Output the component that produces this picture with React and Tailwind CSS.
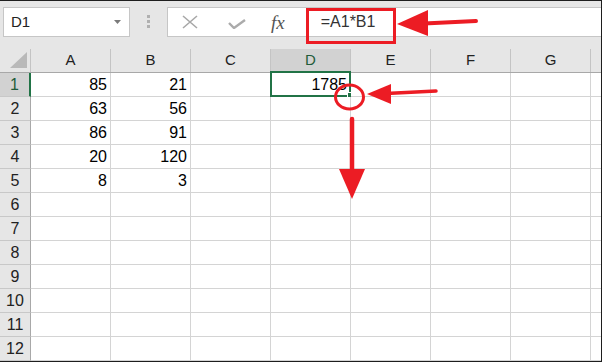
import React from "react";

const cols = ["A", "B", "C", "D", "E", "F", "G"];
const data = {
  1: { A: "85", B: "21", D: "1785" },
  2: { A: "63", B: "56" },
  3: { A: "86", B: "91" },
  4: { A: "20", B: "120" },
  5: { A: "8", B: "3" },
};

function Toolbar() {
  return (
    <div className="flex h-[48px] items-start pt-[6px]">
      {/* name box */}
      <div className="ml-[3px] flex h-[30px] w-[127px] items-center justify-between border border-[#c6c6c6] bg-white pl-[7px] pr-[8px] text-[15px] text-[#222]">
        <span>D1</span>
        <svg width="7" height="4" viewBox="0 0 7 4">
          <path d="M0 0 H7 L3.5 4 Z" fill="#7a7a7a" />
        </svg>
      </div>
      {/* grip dots */}
      <div className="flex w-[37px] flex-col items-center gap-[2px] pt-[8px]">
        <div className="h-[3px] w-[3px] bg-[#b0b0b0]" />
        <div className="h-[3px] w-[3px] bg-[#b0b0b0]" />
        <div className="h-[3px] w-[3px] bg-[#b0b0b0]" />
      </div>
      {/* formula bar */}
      <div className="flex h-[30px] flex-1 items-center border-y border-l border-[#c6c6c6] bg-white">
        <svg className="ml-[14px]" width="16" height="14" viewBox="0 0 16 14">
          <path d="M1 1 L15 13 M15 1 L1 13" stroke="#a8a8a8" strokeWidth="1.6" fill="none" />
        </svg>
        <svg className="ml-[30px] mt-[4px]" width="18" height="10" viewBox="0 0 18 10">
          <path d="M1 4 L6 9 L17 1" stroke="#ababab" strokeWidth="2.4" fill="none" />
        </svg>
        <span className="ml-[25px] font-['Liberation_Serif',serif] text-[19px] italic leading-none text-[#555]">
          fx
        </span>
        <span className="ml-[36px] text-[16px] text-[#333]">=A1*B1</span>
      </div>
    </div>
  );
}

function HeaderRow() {
  return (
    <div className="flex h-[24px] border-b border-[#a8a8a8]">
      <div className="relative w-[31px] shrink-0 border-r border-[#c4c4c4]">
        <svg className="absolute left-[10px] top-[3px]" width="17" height="16" viewBox="0 0 17 16">
          <path d="M17 0 V16 H0 Z" fill="#b9b9b9" />
        </svg>
      </div>
      {cols.map((c) => (
        <div
          key={c}
          className={
            c === "D"
              ? "flex w-[80px] shrink-0 items-center justify-center border-r border-[#c4c4c4] bg-[#d2d2d2] text-[15px] text-[#1f5c3a]"
              : "flex w-[80px] shrink-0 items-center justify-center border-r border-[#c4c4c4] text-[15px] text-[#222]"
          }
        >
          {c}
        </div>
      ))}
      <div className="flex-1" />
    </div>
  );
}

function Row({ n }) {
  const row = data[n] || {};
  return (
    <div className="flex h-[24px]">
      <div
        className={
          n === 1
            ? "flex w-[31px] shrink-0 items-center justify-center border-b border-r-2 border-b-[#c8c8c8] border-r-[#217346] bg-[#d2d2d2] text-[16px] text-[#1f5c3a]"
            : "flex w-[31px] shrink-0 items-center justify-center border-b border-r border-b-[#c8c8c8] border-r-[#a8a8a8] text-[16px] text-[#222]"
        }
      >
        {n}
      </div>
      {cols.map((c) => (
        <div
          key={c}
          className="relative flex w-[80px] shrink-0 items-center justify-end border-b border-r border-[#d4d4d4] bg-white pr-[3px] text-[16px] text-black"
        >
          {row[c]}
          {n === 1 && c === "D" && (
            <>
              <div className="absolute -bottom-px -left-px -right-px -top-[2px] border-2 border-[#217346]" />
              <div className="absolute -bottom-[2px] -right-[3px] h-[6px] w-[6px] border border-white bg-[#217346]" />
            </>
          )}
        </div>
      ))}
      <div className="flex-1 border-b border-[#d4d4d4] bg-white" />
    </div>
  );
}

function Annotations() {
  const red = "#ec1c24";
  return (
    <svg className="pointer-events-none absolute inset-0" width="602" height="362" viewBox="0 0 602 362">
      {/* box around formula */}
      <rect x="307.5" y="8.5" width="87" height="33" fill="none" stroke={red} strokeWidth="3" />
      {/* arrow to formula */}
      <path d="M476 20 L424 22.5" stroke={red} strokeWidth="4" strokeLinecap="round" />
      <path d="M397 23 L428 9 L428 35 Z" fill={red} />
      {/* circle on fill handle */}
      <ellipse cx="349.5" cy="96" rx="14" ry="12" fill="none" stroke={red} strokeWidth="3" />
      {/* arrow to fill handle */}
      <path d="M436 90 L386 92.5" stroke={red} strokeWidth="3.5" strokeLinecap="round" />
      <path d="M367 93 L391 83 L391 103 Z" fill={red} />
      {/* down arrow */}
      <path d="M352 118 L352 172" stroke={red} strokeWidth="4.5" strokeLinecap="round" />
      <path d="M339 168 L365 168 L352 198 Z" fill={red} />
    </svg>
  );
}

export default function App() {
  return (
    <div className="relative h-[362px] w-[602px] overflow-hidden border-b border-r border-t border-[#1e1e1e] bg-[#e6e6e6] font-['Liberation_Sans',Arial,sans-serif]">
      <Toolbar />
      <HeaderRow />
      {Array.from({ length: 12 }, (_, i) => (
        <Row key={i} n={i + 1} />
      ))}
      <Annotations />
    </div>
  );
}
